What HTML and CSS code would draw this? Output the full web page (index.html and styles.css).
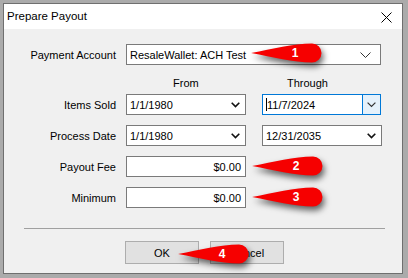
FILE: index.html
```html
<!DOCTYPE html>
<html>
<head>
    <title>Prepare Payout</title>
    <link rel="stylesheet" href="styles.css">
</head>
<body>
    <div class="window">
        <div class="titlebar">
            <span class="title">Prepare Payout</span>
            <svg class="close" width="11" height="11" viewBox="0 0 11 11"><path d="M0.5 0.5 L10.5 10.5 M10.5 0.5 L0.5 10.5" stroke="#000" stroke-width="1" fill="none"/></svg>
        </div>
        <div class="content">
            <div class="row">
                <div class="label">Payment Account</div>
                <div class="box wide">
                    <span class="val">ResaleWallet: ACH Test</span>
                    <svg class="chev thin" width="11" height="6" viewBox="0 0 11 6"><path d="M0.5 0.5 L5.5 5.5 L10.5 0.5" stroke="#333" fill="none"/></svg>
                </div>
            </div>
            <div class="header">
                <div class="label"></div>
                <div class="col from-head">From</div>
                <div class="col through-head">Through</div>
            </div>
            <div class="row">
                <div class="label">Items Sold</div>
                <div class="box col">
                    <span class="val">1/1/1980</span>
                    <svg class="chev" width="9" height="6" viewBox="0 0 9 6"><path d="M0.7 0.7 L4.5 4.5 L8.3 0.7" stroke="#111" stroke-width="1.6" fill="none"/></svg>
                </div>
                <div class="box col focus">
                    <span class="val"><span class="caret"></span>11/7/2024</span>
                    <div class="dropbtn">
                        <svg width="9" height="6" viewBox="0 0 9 6"><path d="M0.6 0.6 L4.5 4.5 L8.4 0.6" stroke="#333" stroke-width="1.2" fill="none"/></svg>
                    </div>
                </div>
            </div>
            <div class="row">
                <div class="label">Process Date</div>
                <div class="box col">
                    <span class="val">1/1/1980</span>
                    <svg class="chev" width="9" height="6" viewBox="0 0 9 6"><path d="M0.7 0.7 L4.5 4.5 L8.3 0.7" stroke="#111" stroke-width="1.6" fill="none"/></svg>
                </div>
                <div class="box col">
                    <span class="val">12/31/2035</span>
                    <svg class="chev" width="9" height="6" viewBox="0 0 9 6"><path d="M0.7 0.7 L4.5 4.5 L8.3 0.7" stroke="#111" stroke-width="1.6" fill="none"/></svg>
                </div>
            </div>
            <div class="row">
                <div class="label">Payout Fee</div>
                <div class="box col money"><span class="val">$0.00</span></div>
            </div>
            <div class="row">
                <div class="label">Minimum</div>
                <div class="box col money"><span class="val">$0.00</span></div>
            </div>
            <div class="separator"></div>
            <div class="buttons">
                <div class="btn">OK</div>
                <div class="btn">Cancel</div>
            </div>
        </div>
    </div>

    <!-- numbered callouts laid over the dialog -->
    <div class="callout c1">
        <svg width="72" height="20" viewBox="0 0 72 20"><path d="M0 10 C22 6 42 0.5 61 0.5 A9.5 9.5 0 0 1 61 19.5 C42 19.5 22 14 0 10 Z" fill="#f60000"/></svg>
        <span>1</span>
    </div>
    <div class="callout c2">
        <svg width="72" height="20" viewBox="0 0 72 20"><path d="M0 10 C22 6 42 0.5 61 0.5 A9.5 9.5 0 0 1 61 19.5 C42 19.5 22 14 0 10 Z" fill="#f60000"/></svg>
        <span>2</span>
    </div>
    <div class="callout c3">
        <svg width="72" height="20" viewBox="0 0 72 20"><path d="M0 10 C22 6 42 0.5 61 0.5 A9.5 9.5 0 0 1 61 19.5 C42 19.5 22 14 0 10 Z" fill="#f60000"/></svg>
        <span>3</span>
    </div>
    <div class="callout c4">
        <svg width="72" height="20" viewBox="0 0 72 20"><path d="M0 10 C22 6 42 0.5 61 0.5 A9.5 9.5 0 0 1 61 19.5 C42 19.5 22 14 0 10 Z" fill="#f60000"/></svg>
        <span>4</span>
    </div>
</body>
</html>
```

FILE: styles.css
```css
body {
    margin: 0;
    padding: 3px 0 0 3px;
    background-color: #ababab;
    font-family: 'Liberation Sans', Arial, sans-serif;
    font-size: 11px;
    color: #000;
    position: relative;
    height: 275px;
    overflow: hidden;
}

.window {
    width: 400px;
    height: 271px;
    box-sizing: border-box;
    border: 1px solid #6f6f6f;
    background-color: #f0f0f0;
}

.titlebar {
    height: 25px;
    background-color: #fff;
    display: flex;
    align-items: center;
    justify-content: space-between;
    padding: 0 10px 0 3px;
}

.title {
    font-size: 11.5px;
    padding-bottom: 1px;
}

.close {
    margin-top: 1px;
}

.content {
    padding-top: 15px;
}

.row {
    display: flex;
    align-items: center;
    height: 21px;
    margin-bottom: 10px;
}

.label {
    width: 112px;
    margin-right: 10px;
    text-align: right;
    flex-shrink: 0;
}

.box {
    height: 21px;
    box-sizing: border-box;
    border: 1px solid #7a7a7a;
    background-color: #fff;
    display: flex;
    align-items: center;
    justify-content: space-between;
    padding: 0 5px 0 3px;
    position: relative;
}

.wide {
    width: 255px;
    padding-right: 9px;
}

.col {
    width: 120px;
    margin-right: 16px;
    box-sizing: border-box;
}

.header {
    display: flex;
    height: 14px;
    line-height: 14px;
    margin-top: -10px;
    margin-bottom: 4px;
    padding-top: 11px;
}

.from-head {
    padding-left: 47px;
}

.through-head {
    padding-left: 25px;
}

.focus {
    border-color: #0078d7;
    width: 119px;
    padding-right: 0;
}

.caret {
    display: inline-block;
    width: 1px;
    height: 13px;
    background-color: #000;
    vertical-align: -2px;
}

.dropbtn {
    width: 17px;
    height: 19px;
    background-color: #e5f1fb;
    border-left: 1px solid #0078d7;
    display: flex;
    align-items: center;
    justify-content: center;
}

.money {
    justify-content: flex-end;
    padding-right: 4px;
}

.separator {
    margin: 20px 0 0 20px;
    width: 361px;
    height: 1px;
    background-color: #a0a0a0;
}

.buttons {
    display: flex;
    gap: 11px;
    padding-left: 121px;
    margin-top: 12px;
}

.btn {
    width: 74px;
    height: 23px;
    box-sizing: border-box;
    border: 1px solid #adadad;
    background-color: #e1e1e1;
    display: flex;
    align-items: center;
    justify-content: center;
}

.callout {
    position: absolute;
    width: 72px;
    height: 20px;
}

.callout svg {
    display: block;
    filter: drop-shadow(2px 4px 3px rgba(0, 0, 0, 0.6));
}

.callout span {
    position: absolute;
    left: 38px;
    top: 0;
    width: 12px;
    line-height: 20px;
    text-align: center;
    color: #fff;
    font-weight: bold;
    font-size: 12px;
}

.c1 { left: 251px; top: 43px; }
.c2 { left: 252px; top: 156px; }
.c3 { left: 252px; top: 187px; }
.c4 { left: 178px; top: 244px; }
```
